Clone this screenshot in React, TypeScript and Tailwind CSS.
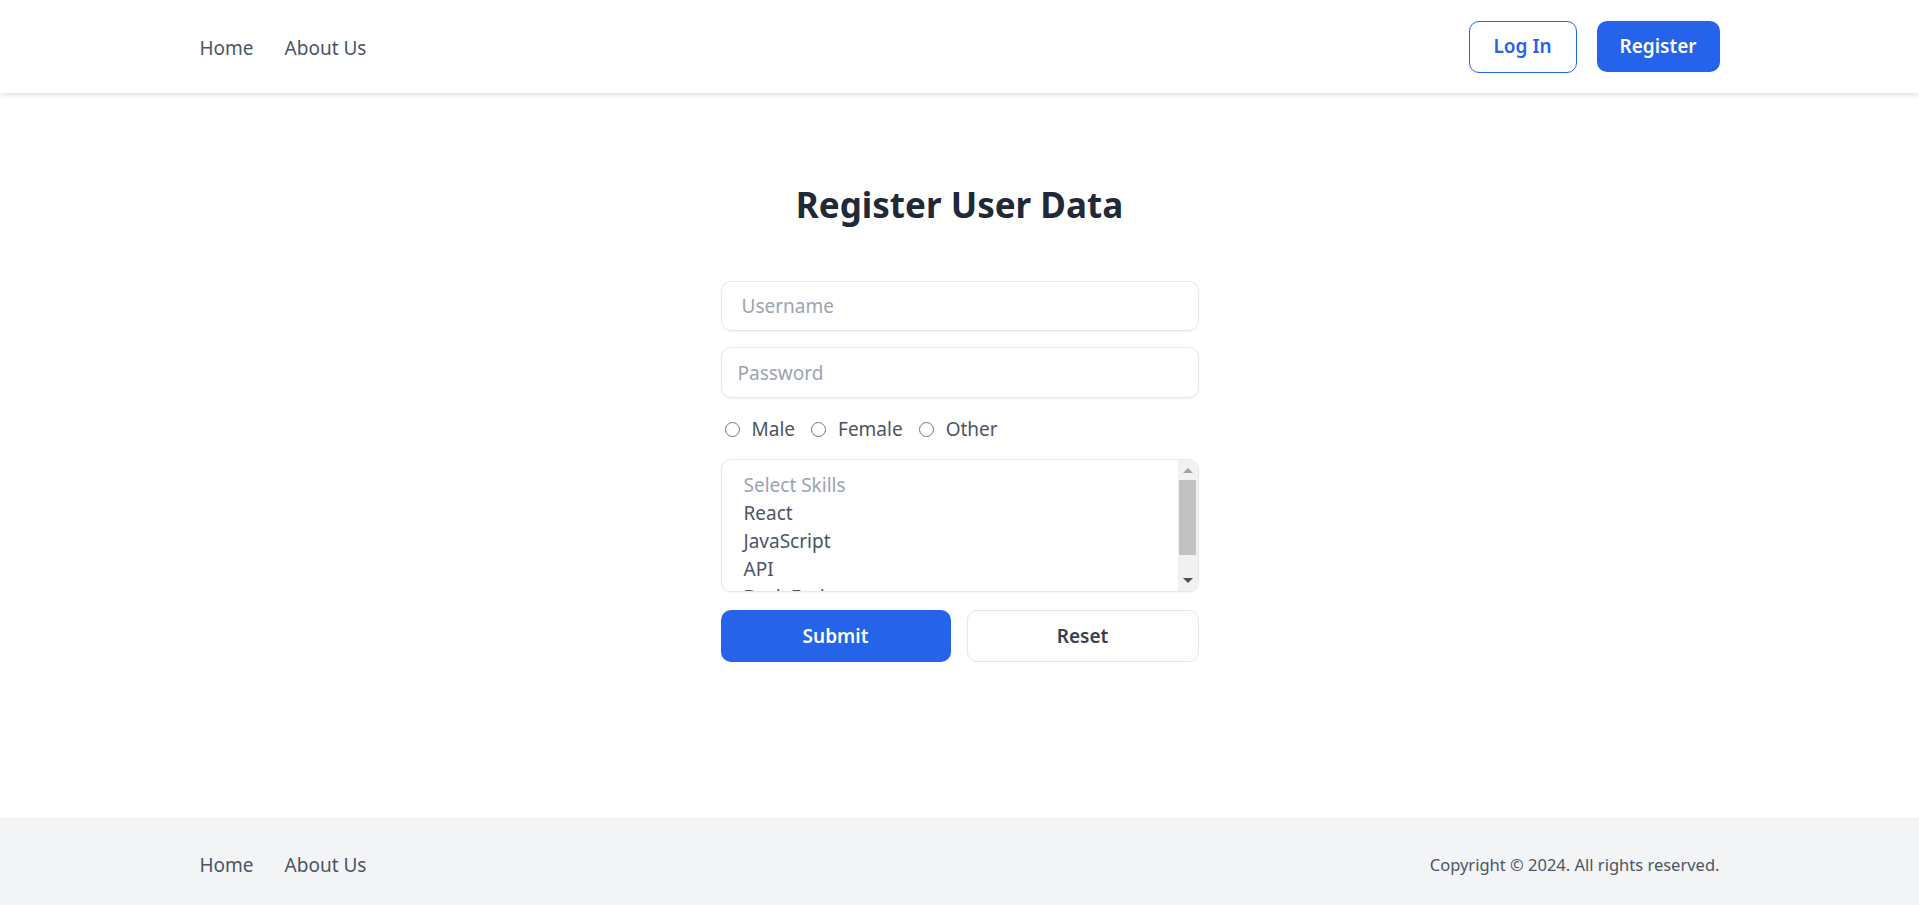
import { useState } from 'react'

const skills = ['React', 'JavaScript', 'API', 'Back End']

function Nav({ className = '' }: { className?: string }) {
  return (
    <nav className={`flex items-center gap-[31px] text-[19px] text-[#4b5563] ${className}`}>
      <a href="#" className="hover:text-[#2563eb]">Home</a>
      <a href="#" className="hover:text-[#2563eb]">About Us</a>
    </nav>
  )
}

export default function App() {
  const [gender, setGender] = useState<string | null>(null)

  return (
    <div className="flex min-h-[905px] flex-col bg-white font-['Noto_Sans',sans-serif]">
      <header className="relative z-10 h-[93px] bg-white shadow-[0_2px_5px_rgba(0,0,0,0.12)]">
        <div className="mx-auto flex h-full w-[1520px] items-center justify-between">
          <Nav className="pt-[3px]" />
          <div className="flex items-center gap-5">
            <button className="h-[52px] w-[108px] rounded-[10px] border border-[#2563eb] text-[19px] font-semibold text-[#2563eb]">
              Log In
            </button>
            <button className="h-[51px] w-[123px] rounded-[10px] bg-[#2563eb] text-[19px] font-semibold text-white">
              Register
            </button>
          </div>
        </div>
      </header>

      <main className="flex h-[725px] flex-col items-center pt-[89px]">
        <h1 className="text-[35px] leading-[46px] font-bold text-[#1f2937]">Register User Data</h1>

        <form className="mt-[53px] flex w-[478px] flex-col" onSubmit={(e) => e.preventDefault()}>
          <input
            type="text"
            placeholder="Username"
            className="h-[50px] rounded-[10px] border border-[#e5e7eb] px-5 text-[19px] text-[#374151] shadow-[0_1px_2px_rgba(0,0,0,0.05)] placeholder:text-[#9ca3af] focus:outline-none"
          />
          <input
            type="password"
            placeholder="Password"
            className="mt-4 h-[51px] rounded-[10px] border border-[#e5e7eb] px-4 text-[19px] text-[#374151] shadow-[0_1px_2px_rgba(0,0,0,0.05)] placeholder:text-[#9ca3af] focus:outline-none"
          />

          <div className="mt-4 flex h-[30px] items-center pl-1 text-[19px] text-[#4b5563]">
            {['Male', 'Female', 'Other'].map((g) => (
              <label key={g} className="mr-4 flex items-center gap-3">
                <input
                  type="radio"
                  name="gender"
                  checked={gender === g}
                  onChange={() => setGender(g)}
                  className="h-[15px] w-[15px] appearance-none rounded-full border border-[#767676] bg-white checked:border-[5px] checked:border-[#2563eb]"
                />
                {g}
              </label>
            ))}
          </div>

          <div className="mt-[15px] flex h-[133px] overflow-hidden rounded-[10px] border border-[#e5e7eb] shadow-[0_1px_2px_rgba(0,0,0,0.05)]">
            <div className="h-full flex-1 overflow-hidden pt-[11px] pl-[22px] text-[19px] leading-[28px] text-[#4b5563]">
              <div className="text-[#9ca3af]">Select Skills</div>
              {skills.map((s) => (
                <div key={s}>{s}</div>
              ))}
            </div>
            <div className="flex w-[20px] flex-col items-center bg-[#f1f1f1]">
              <div className="flex h-[20px] items-center justify-center">
                <div className="h-0 w-0 border-x-[5px] border-b-[5px] border-x-transparent border-b-[#a3a3a3]" />
              </div>
              <div className="h-[75px] w-[17px] bg-[#c1c1c1]" />
              <div className="flex flex-1 items-end justify-center pb-[8px]">
                <div className="h-0 w-0 border-x-[5px] border-t-[5px] border-x-transparent border-t-[#505050]" />
              </div>
            </div>
          </div>

          <div className="mt-[18px] flex gap-4">
            <button
              type="submit"
              className="h-[52px] flex-1 rounded-[10px] bg-[#2563eb] text-[19px] font-semibold text-white"
            >
              Submit
            </button>
            <button
              type="reset"
              className="h-[52px] flex-1 rounded-[10px] border border-[#e5e7eb] bg-white text-[19px] font-semibold text-[#374151]"
            >
              Reset
            </button>
          </div>
        </form>
      </main>

      <footer className="h-[87px] bg-[#f3f4f6]">
        <div className="mx-auto flex h-full w-[1520px] items-center justify-between pt-[7px]">
          <Nav />
          <p className="text-[16.5px] text-[#4b5563]">Copyright © 2024. All rights reserved.</p>
        </div>
      </footer>
    </div>
  )
}
